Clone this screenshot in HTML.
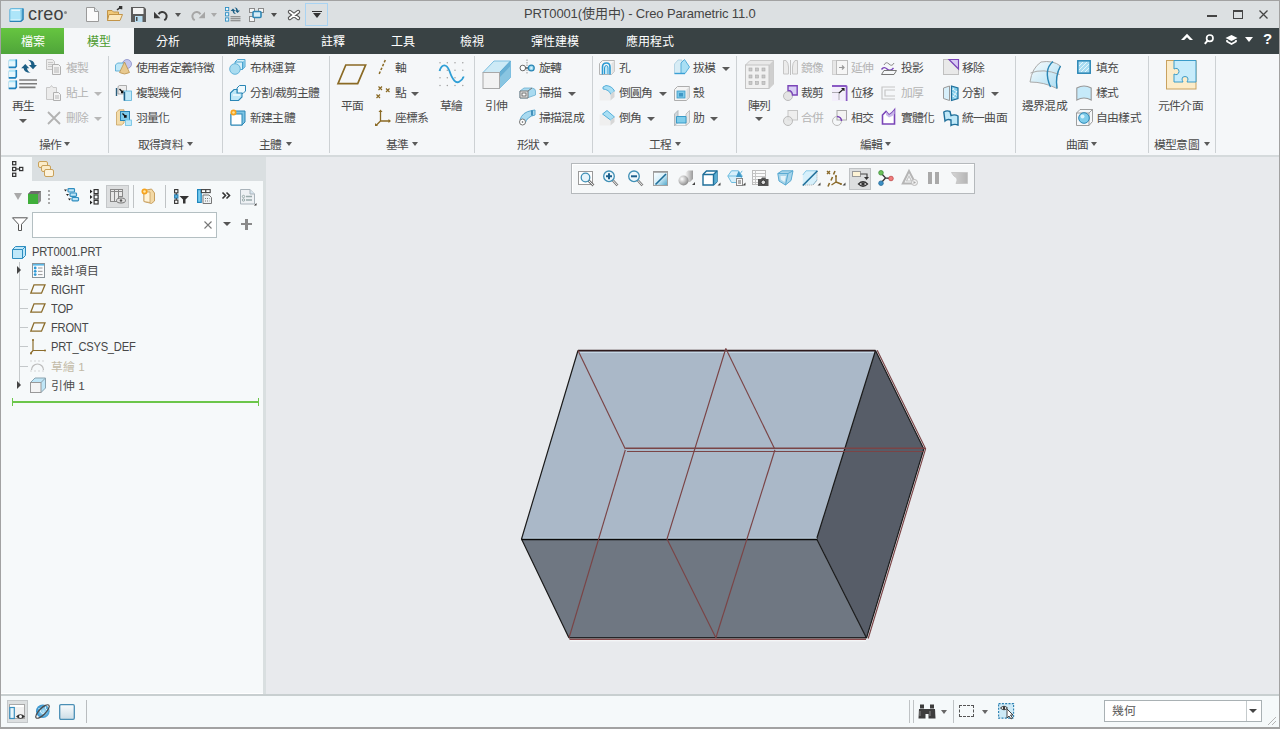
<!DOCTYPE html>
<html lang="zh-TW">
<head>
<meta charset="utf-8">
<style>
*{margin:0;padding:0;box-sizing:border-box}
html,body{width:1280px;height:729px;overflow:hidden;background:#e8eaed;font-family:"Liberation Sans",sans-serif;color:#333}
.a{position:absolute}
svg{position:absolute;overflow:visible}
#border{position:absolute;left:0;top:0;width:1280px;height:729px;border:1px solid #a2a2a2;border-bottom:2px solid #a2a2a2;z-index:50}
#title{left:0;top:0;width:1280px;height:28px;background:#dce0e2}
#tabs{left:0;top:28px;width:1280px;height:26px;background:#394244}
#ribbon{left:0;top:54px;width:1280px;height:101px;background:#f5f7f9}
#rbline{left:0;top:155px;width:1280px;height:2px;background:#d5dadc}
.t{position:absolute;white-space:nowrap;font-size:11.8px;line-height:14px;color:#4a4a4a;letter-spacing:-0.8px}
.tab{position:absolute;top:29px;height:26px;line-height:26px;font-size:12px;color:#fff;text-align:center}
.sep{position:absolute;top:56px;width:1px;height:97px;background:#cdd1d4}
.dis{color:#b4b4b4}
.arr{position:absolute;width:0;height:0;border-left:4px solid transparent;border-right:4px solid transparent;border-top:4px solid #5a5a5a}
#panel{left:0;top:157px;width:263px;height:537px;background:#f6f9fa}
#sash{left:263px;top:181px;width:3px;height:513px;background:#d9dfe0}
#ptabs{left:0;top:157px;width:266px;height:24px;background:#dadfe1}
#gfx{left:266px;top:157px;width:1014px;height:537px;background:#e8eaed}
#status{left:0;top:694px;width:1280px;height:35px;background:#f5f9fa;border-top:2px solid #c8cfd0}
</style>
</head>
<body>
<div id="title" class="a"></div>
<div id="tabs" class="a"></div>
<div id="ribbon" class="a"></div>
<div id="rbline" class="a"></div>
<div id="panel" class="a"></div>
<div id="ptabs" class="a"></div>
<div id="sash" class="a"></div>
<div id="gfx" class="a"></div>
<div id="status" class="a"></div>
<!-- title bar -->
<svg style="left:9px;top:8px" width="15" height="14" viewBox="0 0 15 14">
 <path d="M0.8 2 Q0.8 0.6 2.2 0.6 H14 V11.5 L11.8 13.4 H0.8Z" fill="#ade5f9" stroke="#62b3da" stroke-width="1"/>
 <path d="M11.5 2 L14 0.6 V11.5 L11.8 13.4Z" fill="#7bc3e3"/>
 <path d="M14 0.6 V11.5 L11.8 13.4 H0.8" fill="none" stroke="#2a82b5" stroke-width="1.4"/>
 <path d="M2.5 2.2 H11" stroke="#f2fbfe" stroke-width="1.2"/>
 <path d="M1.5 11.8 H11.5" stroke="#d9f4fc" stroke-width="1"/>
</svg>
<div class="t" style="left:28px;top:4px;font-size:18px;line-height:20px;color:#404040;letter-spacing:0.15px">creo</div>
<div class="a" style="left:63.5px;top:11px;width:3px;height:3px;border-radius:2px;background:#8a8a8a"></div>
<!-- new -->
<svg style="left:86px;top:7px" width="14" height="15" viewBox="0 0 14 15">
 <path d="M0.5 0.5 H8.5 L12.5 4.5 V14.5 H0.5Z" fill="#fbfbfb" stroke="#9a9a9a"/>
 <path d="M8.5 0.5 V4.5 H12.5" fill="#dfe6ea" stroke="#9a9a9a"/>
</svg>
<!-- open -->
<svg style="left:107px;top:6px" width="16" height="16" viewBox="0 0 16 16">
 <path d="M0.5 4.5 H5 L6.5 6 H11.5 V14.5 H0.5Z" fill="#f0c878" stroke="#c29448"/>
 <path d="M2 8.5 H15.5 L13 14.5 H0.5Z" fill="#fbe8bf" stroke="#c29448"/>
 <path d="M10 4 L14 0.8 M12 0.8 H14.5 V3.3" fill="none" stroke="#333" stroke-width="1.6"/>
</svg>
<!-- save -->
<svg style="left:131px;top:7px" width="15" height="15" viewBox="0 0 15 15">
 <path d="M0 0 H13 L15 2 V15 H0Z" fill="#5c5c5c"/>
 <rect x="2" y="1" width="10.5" height="6" fill="#f4f4f4"/>
 <rect x="4" y="9" width="7.5" height="6" fill="#b7dcf0"/>
 <rect x="5" y="10" width="1.5" height="4" fill="#4a4a4a"/>
</svg>
<!-- undo -->
<svg style="left:154px;top:10px" width="14" height="11" viewBox="0 0 14 11">
 <path d="M0 8.2 L0 1.8 L6.4 8.2Z" fill="#3a3a3a"/>
 <path d="M4.6 4.2 A4.3 4.3 0 1 1 10.2 10.2" fill="none" stroke="#3a3a3a" stroke-width="2"/>
</svg>
<div class="arr" style="left:175px;top:13px;border-left-width:3.5px;border-right-width:3.5px;border-top:4px solid #555"></div>
<!-- redo -->
<svg style="left:191px;top:10px" width="14" height="11" viewBox="0 0 14 11">
 <g transform="translate(14,0) scale(-1,1)">
 <path d="M0 8.2 L0 1.8 L6.4 8.2Z" fill="#a6a6a6"/>
 <path d="M4.6 4.2 A4.3 4.3 0 1 1 10.2 10.2" fill="none" stroke="#a6a6a6" stroke-width="2"/>
 </g>
</svg>
<div class="arr" style="left:211px;top:13px;border-left-width:3.5px;border-right-width:3.5px;border-top:4px solid #aaa"></div>
<!-- regenerate -->
<svg style="left:225px;top:7px" width="16" height="15" viewBox="0 0 16 15">
 <g fill="#e9f7fc" stroke="#2f8fc4" stroke-width="0.9"><rect x="0.5" y="0.5" width="3.2" height="3.2"/><rect x="0.5" y="5.7" width="3.2" height="3.2"/><rect x="0.5" y="10.9" width="3.2" height="3.2"/></g>
 <path d="M5.5 9.8 H15.5 M5.5 11.8 H15.5 M5.5 13.8 H15.5" stroke="#7a7a7a" stroke-width="1.1"/>
 <path d="M5.5 4 L8 1.5 L10.5 4 H9.2 Q9.2 6 11 7 Q8 7.2 7.6 4Z" fill="#1b5e85"/>
 <path d="M15 3.5 L12.5 6 L10 3.5 H11.3 Q11.3 1.5 9.5 0.5 Q12.5 0.3 12.9 3.5Z" fill="#1b5e85"/>
</svg>
<!-- windows -->
<svg style="left:249px;top:8px" width="15" height="14" viewBox="0 0 15 14">
 <rect x="0.5" y="0.5" width="5" height="4" fill="#f6f6f6" stroke="#8a8a8a"/>
 <rect x="9.5" y="0.5" width="5" height="4" fill="#f6f6f6" stroke="#8a8a8a"/>
 <rect x="0.5" y="8.5" width="5" height="5" fill="#f6f6f6" stroke="#8a8a8a"/>
 <rect x="4" y="3.5" width="8" height="6" rx="1" fill="#d6ecf7" stroke="#2f86b4" stroke-width="1.6"/>
</svg>
<div class="arr" style="left:271px;top:13px;border-left-width:3.5px;border-right-width:3.5px;border-top:4px solid #4c4c4c"></div>
<!-- close -->
<svg style="left:288px;top:10px" width="12" height="10" viewBox="0 0 12 10">
 <path d="M1.8 1.8 L10.2 8.2 M10.2 1.8 L1.8 8.2" stroke="#555" stroke-width="4" stroke-linecap="round"/>
 <path d="M1.8 1.8 L10.2 8.2 M10.2 1.8 L1.8 8.2" stroke="#fff" stroke-width="1.8" stroke-linecap="round"/>
</svg>
<div class="a" style="left:305px;top:3px;width:23px;height:23px;border:1px solid #a9d3f2"></div>
<div class="a" style="left:312px;top:11px;width:10px;height:1px;background:#333"></div>
<div class="arr" style="left:312.5px;top:13px;border-left-width:4.5px;border-right-width:4.5px;border-top:5px solid #333"></div>
<div class="t" style="left:524px;top:6px;font-size:13px;line-height:16px;color:#444;letter-spacing:-0.14px">PRT0001(使用中) - Creo Parametric 11.0</div>
<!-- window controls -->
<div class="a" style="left:1207px;top:15px;width:10px;height:2px;background:#444"></div>
<div class="a" style="left:1233px;top:10px;width:10px;height:9px;border:1px solid #444;border-top-width:2px"></div>
<svg style="left:1259px;top:10px" width="9" height="9" viewBox="0 0 9 9"><path d="M0.5 0.5 L8.5 8.5 M8.5 0.5 L0.5 8.5" stroke="#444" stroke-width="1.3"/></svg>
<!-- tabs -->
<div class="a" style="left:1px;top:28px;width:63px;height:26px;background:linear-gradient(#66c540,#4fa53a)"></div>
<div class="tab" style="left:1px;width:63px">檔案</div>
<div class="a" style="left:64px;top:28px;width:70px;height:26px;background:#f5f7f9"></div>
<div class="tab" style="left:64px;width:70px;color:#4a9a2c">模型</div>
<div class="tab" style="left:134px;width:68px">分析</div>
<div class="tab" style="left:202px;width:98px">即時模擬</div>
<div class="tab" style="left:300px;width:66px">註釋</div>
<div class="tab" style="left:370px;width:66px">工具</div>
<div class="tab" style="left:439px;width:66px">檢視</div>
<div class="tab" style="left:505px;width:100px">彈性建模</div>
<div class="tab" style="left:600px;width:100px">應用程式</div>
<svg style="left:1181px;top:33px" width="12" height="8" viewBox="0 0 12 8"><path d="M0 7 L6 0.8 L12 7 H8.8 L6 4.2 L3.2 7Z" fill="#fff"/></svg>
<svg style="left:1204px;top:34px" width="10" height="11" viewBox="0 0 10 11"><circle cx="5.8" cy="4.2" r="3.2" fill="none" stroke="#fff" stroke-width="1.7"/><path d="M3.8 6.3 L0.8 9.8" stroke="#fff" stroke-width="2"/></svg>
<svg style="left:1225px;top:34px" width="13" height="11" viewBox="0 0 13 11"><path d="M0.5 4 L6.5 1 L12.5 4 L6.5 7Z" fill="#fff"/><path d="M2 6 V7.5 L6.5 10 L11 7.5 V6" fill="none" stroke="#fff" stroke-width="1.6"/></svg>
<div class="arr" style="left:1245px;top:37px;border-left-width:4px;border-right-width:4px;border-top:5px solid #fff"></div>
<div class="t" style="left:1263px;top:31px;font-size:15px;line-height:16px;font-weight:bold;color:#fff;letter-spacing:0">?</div>
<!-- ribbon separators -->
<div class="sep" style="left:108px"></div>
<div class="sep" style="left:222px"></div>
<div class="sep" style="left:329px"></div>
<div class="sep" style="left:474px"></div>
<div class="sep" style="left:592px"></div>
<div class="sep" style="left:736px"></div>
<div class="sep" style="left:1015px"></div>
<div class="sep" style="left:1148px"></div>
<div class="sep" style="left:1215px"></div>
<!-- group labels -->
<div class="t" style="left:39px;top:138px">操作</div><div class="arr" style="left:64px;top:142px;border-left-width:3.5px;border-right-width:3.5px"></div>
<div class="t" style="left:138px;top:138px">取得資料</div><div class="arr" style="left:187px;top:142px;border-left-width:3.5px;border-right-width:3.5px"></div>
<div class="t" style="left:259px;top:138px">主體</div><div class="arr" style="left:286px;top:142px;border-left-width:3.5px;border-right-width:3.5px"></div>
<div class="t" style="left:386px;top:138px">基準</div><div class="arr" style="left:412px;top:142px;border-left-width:3.5px;border-right-width:3.5px"></div>
<div class="t" style="left:517px;top:138px">形狀</div><div class="arr" style="left:543px;top:142px;border-left-width:3.5px;border-right-width:3.5px"></div>
<div class="t" style="left:649px;top:138px">工程</div><div class="arr" style="left:675px;top:142px;border-left-width:3.5px;border-right-width:3.5px"></div>
<div class="t" style="left:860px;top:138px">編輯</div><div class="arr" style="left:885px;top:142px;border-left-width:3.5px;border-right-width:3.5px"></div>
<div class="t" style="left:1066px;top:138px">曲面</div><div class="arr" style="left:1091px;top:142px;border-left-width:3.5px;border-right-width:3.5px"></div>
<div class="t" style="left:1154px;top:138px">模型意圖</div><div class="arr" style="left:1204px;top:142px;border-left-width:3.5px;border-right-width:3.5px"></div>
<!-- 操作 -->
<div class="t" style="left:12px;top:99px">再生</div><div class="arr" style="left:19px;top:119px"></div>
<div class="t dis" style="left:66px;top:61px">複製</div>
<div class="t dis" style="left:66px;top:86px">貼上</div><div class="arr" style="left:94px;top:92px;border-top-color:#b8b8b8"></div>
<div class="t dis" style="left:66px;top:111px">刪除</div><div class="arr" style="left:94px;top:117px;border-top-color:#b8b8b8"></div>
<!-- 取得資料 -->
<div class="t" style="left:136px;top:61px">使用者定義特徵</div>
<div class="t" style="left:136px;top:86px">複製幾何</div>
<div class="t" style="left:136px;top:111px">羽量化</div>
<!-- 主體 -->
<div class="t" style="left:250px;top:61px">布林運算</div>
<div class="t" style="left:250px;top:86px">分割/裁剪主體</div>
<div class="t" style="left:250px;top:111px">新建主體</div>
<!-- 基準 -->
<div class="t" style="left:341px;top:99px">平面</div>
<div class="t" style="left:395px;top:61px">軸</div>
<div class="t" style="left:395px;top:86px">點</div><div class="arr" style="left:411px;top:92px"></div>
<div class="t" style="left:395px;top:111px">座標系</div>
<div class="t" style="left:440px;top:99px">草繪</div>
<!-- 形狀 -->
<div class="t" style="left:485px;top:99px">引伸</div>
<div class="t" style="left:539px;top:61px">旋轉</div>
<div class="t" style="left:539px;top:86px">掃描</div><div class="arr" style="left:568px;top:92px"></div>
<div class="t" style="left:539px;top:111px">掃描混成</div>
<!-- 工程 -->
<div class="t" style="left:619px;top:61px">孔</div>
<div class="t" style="left:619px;top:86px">倒圓角</div><div class="arr" style="left:659px;top:92px"></div>
<div class="t" style="left:619px;top:111px">倒角</div><div class="arr" style="left:647px;top:117px"></div>
<div class="t" style="left:693px;top:61px">拔模</div><div class="arr" style="left:722px;top:67px"></div>
<div class="t" style="left:693px;top:86px">殼</div>
<div class="t" style="left:693px;top:111px">肋</div><div class="arr" style="left:710px;top:117px"></div>
<!-- 陣列 -->
<div class="t" style="left:748px;top:99px">陣列</div><div class="arr" style="left:755px;top:117px"></div>
<!-- 編輯 -->
<div class="t dis" style="left:801px;top:61px">鏡像</div>
<div class="t" style="left:801px;top:86px">裁剪</div>
<div class="t dis" style="left:801px;top:111px">合併</div>
<div class="t dis" style="left:851px;top:61px">延伸</div>
<div class="t" style="left:851px;top:86px">位移</div>
<div class="t" style="left:851px;top:111px">相交</div>
<div class="t" style="left:901px;top:61px">投影</div>
<div class="t dis" style="left:901px;top:86px">加厚</div>
<div class="t" style="left:901px;top:111px">實體化</div>
<div class="t" style="left:962px;top:61px">移除</div>
<div class="t" style="left:962px;top:86px">分割</div><div class="arr" style="left:991px;top:92px"></div>
<div class="t" style="left:962px;top:111px">統一曲面</div>
<!-- 曲面 -->
<div class="t" style="left:1022px;top:99px">邊界混成</div>
<div class="t" style="left:1096px;top:61px">填充</div>
<div class="t" style="left:1096px;top:86px">樣式</div>
<div class="t" style="left:1096px;top:111px">自由樣式</div>
<!-- 模型意圖 -->
<div class="t" style="left:1158px;top:99px">元件介面</div>
<!-- 操作 icons -->
<svg style="left:8px;top:59px" width="30" height="31" viewBox="0 0 30 31">
 <g>
  <path d="M0.5 1.8 L1.8 0.5 H8.5 V7.3 L7.3 8.6 H0.5Z" fill="#e6f7fd" stroke="#b9d9e8" stroke-width="0.8"/>
  <path d="M0.5 12.3 L1.8 11 H8.5 V17.8 L7.3 19.1 H0.5Z" fill="#e6f7fd" stroke="#b9d9e8" stroke-width="0.8"/>
  <path d="M0.5 22.8 L1.8 21.5 H8.5 V28.3 L7.3 29.6 H0.5Z" fill="#e6f7fd" stroke="#b9d9e8" stroke-width="0.8"/>
  <path d="M1 1.5 H8 M1 12 H8 M1 22.5 H8" stroke="#a6e3f8" stroke-width="1.6"/>
 </g>
 <g stroke="#1f82bd" stroke-width="1.6" fill="none"><path d="M8.3 0.5 V7.3 L7.3 8.4 H0.8"/><path d="M8.3 11 V17.8 L7.3 18.9 H0.8"/><path d="M8.3 21.5 V28.3 L7.3 29.4 H0.8"/></g>
 <path d="M11.2 21 H29 M11.2 24.7 H29 M11.2 28.4 H27.5" stroke="#7d7d7d" stroke-width="1.6"/>
 <path d="M17.3 5 L13.2 9.3 H21.2Z" fill="#1b5e85"/>
 <path d="M15.6 9 Q15.8 13.8 22.6 13.8 Q19.2 12.2 19 9Z" fill="#1b5e85"/>
 <path d="M25 10.2 L20.9 5.9 H28.9Z" fill="#1b5e85"/>
 <path d="M26.7 6.2 Q26.5 1.2 20 0.8 Q23.3 2.8 23.3 6.2Z" fill="#1b5e85"/>
</svg>
<svg style="left:46px;top:59px" width="16" height="16" viewBox="0 0 16 16">
 <path d="M0.5 0.5 H6.5 L8.5 2.5 V10.5 H0.5Z" fill="#ececec" stroke="#c4c4c4"/>
 <path d="M2 3.5 H7 M2 5.5 H7 M2 7.5 H7" stroke="#c8c8c8"/>
 <path d="M6.5 5.5 H12.5 L14.5 7.5 V15.5 H6.5Z" fill="#f2f2f2" stroke="#b0b0b0"/>
 <path d="M8 9 H13 M8 11 H13 M8 13 H13" stroke="#b5b5b5"/>
</svg>
<svg style="left:46px;top:85px" width="16" height="16" viewBox="0 0 16 16">
 <path d="M0.5 2.5 H4 L5.5 0.5 L7 2.5 H10.5 V14.5 H0.5Z" fill="#ececec" stroke="#c8c8c8"/>
 <path d="M7.5 7.5 H12.5 L14.5 9.5 V15.5 H7.5Z" fill="#f4f4f4" stroke="#b0b0b0"/>
 <path d="M9 11 H13 M9 13 H13" stroke="#b5b5b5"/>
</svg>
<svg style="left:47px;top:111px" width="14" height="14" viewBox="0 0 14 14">
 <path d="M1 1 L13 13 M13 1 L1 13" stroke="#b2b2b2" stroke-width="1.8"/>
</svg>
<!-- 取得資料 icons -->
<svg style="left:115px;top:59px" width="17" height="16" viewBox="0 0 17 16">
 <circle cx="12" cy="5" r="4.5" fill="#c4c6ec" stroke="#8a8fc8" stroke-width="0.8"/>
 <path d="M0.5 6 L2.5 4 H10 V10 L8 12 H0.5Z" fill="#bfe8f8" stroke="#4aa3cf" stroke-width="0.8"/>
 <path d="M9.5 3 L14.5 13.5 Q9.5 16.5 4.5 13.5Z" fill="#e8c98f" stroke="#b99250" stroke-width="0.8"/>
</svg>
<svg style="left:116px;top:85px" width="16" height="16" viewBox="0 0 16 16">
 <path d="M2 1.5 L3.5 0.5 H10.5 V9 H2Z" fill="#ededed" stroke="#9a9a9a" stroke-width="0.8"/>
 <path d="M0.5 3 V11" stroke="#2a5d7c" stroke-width="1.4"/>
 <path d="M3.5 4 L7 7.5 M5 7.5 H7 V5.5" stroke="#111" stroke-width="1.3" fill="none"/>
 <rect x="8" y="6" width="7.5" height="9.5" fill="#bfe8f8" stroke="#5ab1d8" stroke-width="0.8"/>
 <path d="M8.5 7 V15.5" stroke="#1f5f86" stroke-width="1.4"/>
</svg>
<svg style="left:116px;top:109px" width="16" height="17" viewBox="0 0 16 17">
 <path d="M0.5 3 L3 0.8 H8 V14 L5.5 16 H0.5Z" fill="#f3dcaa" stroke="#c9a260" stroke-width="0.8"/>
 <rect x="4.5" y="2.5" width="9" height="9" fill="#7fcdeb" stroke="#2a86b5" stroke-width="1"/>
 <path d="M6.5 4.5 L10 8 M8 8 H10 V6" stroke="#111" stroke-width="1.3" fill="none"/>
 <rect x="9.5" y="11" width="6" height="5.5" fill="#bfe8f8" stroke="#6cc0e3" stroke-width="0.8"/>
</svg>
<!-- 主體 icons -->
<svg style="left:229px;top:59px" width="17" height="16" viewBox="0 0 17 16">
 <path d="M6 3 L8.5 0.5 H16 V8 L13.5 10.5 H6Z" fill="#d5f0fa" stroke="#3d9ccc" stroke-width="0.9"/>
 <path d="M13.5 3 L16 0.5 V8 L13.5 10.5Z" fill="#7ec4e4"/>
 <path d="M6 3 H13.5 V10.5" fill="none" stroke="#3d9ccc" stroke-width="0.9"/>
 <circle cx="6" cy="10" r="5.3" fill="#a9dcf0" stroke="#5aaed6" stroke-width="0.9"/>
</svg>
<svg style="left:230px;top:85px" width="16" height="16" viewBox="0 0 16 16">
 <path d="M7 3 L9.5 0.5 H15.5 V6 L13 8.5 H7Z" fill="#eef9fd" stroke="#2a86b5" stroke-width="1"/>
 <path d="M0.5 8 L4 4.5 H7 V8 H12 V12 L8.5 15.5 H0.5Z" fill="#bfe8f8" stroke="#2a86b5" stroke-width="1.1"/>
 <path d="M3 10 H10" stroke="#fff" stroke-width="1.2"/>
</svg>
<svg style="left:230px;top:109px" width="16" height="17" viewBox="0 0 16 17">
 <path d="M1 5 L4 2 H15 V13 L12 16 H1Z" fill="#7ec4e4" stroke="#2a86b5" stroke-width="1"/>
 <rect x="1" y="5" width="11" height="11" fill="#fff" stroke="#2a86b5" stroke-width="1"/>
 <circle cx="3.5" cy="3.5" r="3" fill="#f6a21d"/><circle cx="3.5" cy="3.5" r="1.3" fill="#ffe49a"/>
</svg>
<!-- 基準 icons -->
<svg style="left:336px;top:63px" width="32" height="23" viewBox="0 0 32 23">
 <path d="M9.8 2 H29.6 L21.7 20.6 H2Z" fill="none" stroke="#8a6a25" stroke-width="1.7"/>
</svg>
<svg style="left:377px;top:59px" width="10" height="17" viewBox="0 0 10 17">
 <path d="M8.3 1 L1.7 16" stroke="#8a6a25" stroke-width="1.5" stroke-dasharray="2.6 1.6"/>
</svg>
<svg style="left:376px;top:86px" width="15" height="14" viewBox="0 0 15 14">
 <g stroke="#8a6a25" stroke-width="1.2"><path d="M2.5 0.5 L6 4 M6 0.5 L2.5 4"/><path d="M10 2.5 L13.5 6 M13.5 2.5 L10 6"/><path d="M0.5 8.5 L4 12 M4 8.5 L0.5 12"/></g>
</svg>
<svg style="left:374px;top:109px" width="18" height="18" viewBox="0 0 18 18">
 <g stroke="#8a6a25" stroke-width="1.3" fill="none"><path d="M6.5 2 V12 H15.5 M6.5 12 L2 16.5"/></g>
 <g fill="#8a6a25"><path d="M4.5 3 L6.5 0.5 L8.5 3Z"/><path d="M14.5 10 L17 12 L14.5 14Z"/><path d="M1 14 L1 17 L4 17Z"/></g>
</svg>
<svg style="left:438px;top:61px" width="27" height="26" viewBox="0 0 27 26">
 <g fill="#9a9a9a"><circle cx="2" cy="1.7" r="0.7"/><circle cx="9.3" cy="1.7" r="0.7"/><circle cx="17" cy="1.7" r="0.7"/><circle cx="24.8" cy="1.7" r="0.7"/>
 <circle cx="2" cy="9.3" r="0.7"/><circle cx="9.3" cy="9.3" r="0.7"/><circle cx="17" cy="9.3" r="0.7"/><circle cx="24.8" cy="9.3" r="0.7"/>
 <circle cx="2" cy="16.8" r="0.7"/><circle cx="9.3" cy="16.8" r="0.7"/><circle cx="17" cy="16.8" r="0.7"/><circle cx="24.8" cy="16.8" r="0.7"/>
 <circle cx="2" cy="24.5" r="0.7"/><circle cx="9.3" cy="24.5" r="0.7"/><circle cx="17" cy="24.5" r="0.7"/><circle cx="24.8" cy="24.5" r="0.7"/></g>
 <path d="M1.5 10 C4 2.5 8.5 2.5 11.5 10 C14.5 19 18 23 21.5 20.5 C23.5 19.5 25 17.5 25.8 15.5" fill="none" stroke="#2f9fd6" stroke-width="1.8"/>
</svg>
<!-- 形狀 icons -->
<svg style="left:482px;top:60px" width="30" height="30" viewBox="0 0 30 30">
 <path d="M1 12.5 L12 1 H28.5 V17.5 L17.5 28.5 H1Z" fill="#cdeaf6"/>
 <path d="M17.5 12.5 L28.5 1 V17.5 L17.5 28.5Z" fill="#68b0d4"/>
 <path d="M17.5 17.5 L28.5 6 V17.5 L17.5 28.5Z" fill="#a9d9ee" opacity="0.5"/>
 <path d="M1 12.5 L12 1 H28.5 V17.5 L17.5 28.5" fill="none" stroke="#7ebfe0" stroke-width="1"/>
 <path d="M17.5 12.5 L28.5 1" stroke="#5aa8d0" stroke-width="1"/>
 <rect x="1" y="12.5" width="16.5" height="16" fill="#f2f2f2" stroke="#a8a8a8" stroke-width="1"/>
</svg>
<svg style="left:519px;top:59px" width="17" height="16" viewBox="0 0 17 16">
 <path d="M8 0.5 V15.5" stroke="#999" stroke-width="1" stroke-dasharray="1.5 1"/>
 <path d="M4 9 H12" stroke="#555" stroke-width="1.4"/>
 <circle cx="3.8" cy="9" r="2.8" fill="#fff" stroke="#666" stroke-width="1"/>
 <circle cx="12.3" cy="9" r="2.9" fill="#9bd8f0" stroke="#2a86b5" stroke-width="1.3"/>
 <circle cx="12.3" cy="9" r="1.1" fill="#e0f4fb"/>
</svg>
<svg style="left:519px;top:87px" width="17" height="12" viewBox="0 0 17 12">
 <path d="M1 4 L5 1 H13 Q16.5 1.5 16.5 4 V8 L8 11 H1Z" fill="#a9daf0" stroke="#6aaed0" stroke-width="0.8"/>
 <path d="M1 4 H9 V11 H1Z" fill="#e8e8e8" stroke="#777" stroke-width="1"/>
 <rect x="3" y="6" width="4" height="3" fill="#fff" stroke="#555" stroke-width="0.8"/>
 <path d="M9 4 L13 1" stroke="#777"/>
</svg>
<svg style="left:519px;top:109px" width="17" height="17" viewBox="0 0 17 17">
 <path d="M1 11 Q3 3 13 1.5 L16 1 V6 Q8 7.5 6 14.5Z" fill="#a9daf0" stroke="#5aa8d0" stroke-width="1"/>
 <path d="M13 1.5 V6.5" stroke="#2a7fb0" stroke-width="1.6"/>
 <circle cx="3.5" cy="13" r="3" fill="#fff" stroke="#777" stroke-width="1"/>
 <circle cx="3.5" cy="13" r="0.8" fill="#555"/>
</svg>
<!-- 工程 icons -->
<svg style="left:599px;top:60px" width="16" height="15" viewBox="0 0 16 15">
 <path d="M0.5 3.5 L3.5 0.5 H15.5 V11.5 L12.5 14.5 H0.5Z" fill="#f6f6f6" stroke="#b4b4b4"/>
 <path d="M12.5 3.5 L15.5 0.5 V11.5 L12.5 14.5Z" fill="#e2e2e2"/>
 <path d="M3.5 14.5 V7 Q3.5 3 7.5 3 Q11 3 11 7 V14.5" fill="none" stroke="#2a9ad3" stroke-width="1.6"/>
 <path d="M5.5 14 V8 Q5.5 5.5 7.5 5.5 Q9 5.5 9 8 V14" fill="#bfe8f8" stroke="#2a9ad3" stroke-width="1"/>
</svg>
<svg style="left:599px;top:85px" width="16" height="16" viewBox="0 0 16 16">
 <path d="M0.5 4.5 H6 Q10 4.5 11.5 8.5 V15.5 H0.5Z" fill="#efefef"/>
 <path d="M4 2 L7 0.5 Q13 1 15.5 6 L12 9.5 Q10 4.5 4 4Z" fill="#a9dff4" stroke="#4aa8d6" stroke-width="0.9"/>
 <path d="M11.5 9 L15.5 6 V12 L11.5 15.5Z" fill="#d7d7d7"/>
</svg>
<svg style="left:599px;top:110px" width="16" height="16" viewBox="0 0 16 16">
 <path d="M0.5 4.5 H7 L11.5 9 V15.5 H0.5Z" fill="#efefef"/>
 <path d="M3.5 4 L8 0.5 L15.5 7 L11.5 10Z" fill="#a9dff4" stroke="#4aa8d6" stroke-width="0.9"/>
 <path d="M11.5 10 L15.5 7 V12 L11.5 15.5Z" fill="#d7d7d7"/>
</svg>
<svg style="left:674px;top:59px" width="16" height="15" viewBox="0 0 16 15">
 <path d="M0.5 5 L4 1 H8 V14.5 H0.5Z" fill="#d7ecf5" stroke="#a8cde0" stroke-width="0.8"/>
 <path d="M7 4 L10.5 0.5 L15.5 8 L11 14.5 H7Z" fill="#a9dff4" stroke="#4aa8d6" stroke-width="0.9"/>
 <path d="M0.5 14.5 H11" stroke="#3aa0d5" stroke-width="1.4"/>
</svg>
<svg style="left:674px;top:86px" width="16" height="15" viewBox="0 0 16 15">
 <path d="M0.5 3.5 L3.5 0.5 H15.5 V11.5 L12.5 14.5 H0.5Z" fill="#f4f4f4" stroke="#adadad"/>
 <path d="M12.5 3.5 L15.5 0.5 V11.5 L12.5 14.5Z" fill="#dedede"/>
 <rect x="3" y="5" width="8" height="7" fill="#7ec8e8" stroke="#3a9bc8" stroke-width="0.8"/>
 <rect x="5" y="7" width="4" height="3.5" fill="#3f98c6"/>
</svg>
<svg style="left:674px;top:110px" width="16" height="16" viewBox="0 0 16 16">
 <path d="M0.5 4 L4 0.5 V12.5 L0.5 15.5Z" fill="#d0d6da" stroke="#a7b0b5" stroke-width="0.8"/>
 <path d="M12 4 L15.5 0.5 V12.5 L12 15.5Z" fill="#e6e6e6" stroke="#b5b5b5" stroke-width="0.8"/>
 <path d="M2.5 6.5 H12 V13 H2.5Z" fill="#7fcdeb" stroke="#3a9bc8" stroke-width="1"/>
 <path d="M0.5 15.5 H12" stroke="#aaa" stroke-dasharray="1 1"/>
</svg>
<!-- 陣列 -->
<svg style="left:745px;top:60px" width="30" height="30" viewBox="0 0 30 30">
 <path d="M0.5 5 L5 0.5 H28.5 V24 L24 28.5 H0.5Z" fill="#e9e9e9" stroke="#c9c9c9"/>
 <path d="M24 5 L28.5 0.5 V24 L24 28.5Z" fill="#cfcfcf"/>
 <rect x="0.5" y="5" width="23.5" height="23.5" fill="#f0f0f0" stroke="#c4c4c4"/>
 <g fill="#c9c9c9" stroke="#aaa" stroke-width="0.6">
  <rect x="4" y="8" width="3" height="3"/><rect x="10.5" y="8" width="3" height="3"/><rect x="17" y="8" width="3" height="3"/>
  <rect x="4" y="15" width="3" height="3"/><rect x="10.5" y="15" width="3" height="3"/><rect x="17" y="15" width="3" height="3"/>
  <rect x="4" y="21.5" width="3" height="3"/><rect x="10.5" y="21.5" width="3" height="3"/><rect x="17" y="21.5" width="3" height="3"/>
 </g>
</svg>
<!-- 編輯 icons -->
<svg style="left:783px;top:60px" width="15" height="15" viewBox="0 0 15 15">
 <path d="M0.5 14 V0.5 H3 Q5.5 3 5.5 7 V14Z" fill="#ececec" stroke="#c6c6c6"/>
 <path d="M14.5 14 V0.5 H12 Q9.5 3 9.5 7 V14Z" fill="#ececec" stroke="#c6c6c6"/>
 <path d="M7.5 0 V15" stroke="#c0c0c0"/>
</svg>
<svg style="left:783px;top:85px" width="15" height="16" viewBox="0 0 15 16">
 <circle cx="5" cy="11" r="4.5" fill="#e4e4e4" stroke="#bbb"/>
 <path d="M5 0.8 H14.2 V10 H9.5 Q9.5 5.5 5 5.5Z" fill="#d8cff5" stroke="#7a45b8" stroke-width="1.4"/>
</svg>
<svg style="left:783px;top:110px" width="15" height="16" viewBox="0 0 15 16">
 <rect x="5" y="0.5" width="9.5" height="9.5" fill="#eee" stroke="#c5c5c5"/>
 <circle cx="5" cy="11" r="4.5" fill="#e4e4e4" fill-opacity="0.8" stroke="#bbb"/>
</svg>
<svg style="left:832px;top:60px" width="16" height="15" viewBox="0 0 16 15">
 <rect x="0.5" y="0.5" width="4" height="14" fill="#e7e7e7" stroke="#d0d0d0"/>
 <rect x="4.5" y="0.5" width="11" height="14" fill="#f6f6f6" stroke="#bdbdbd"/>
 <path d="M7 7.5 H12 M10 5.5 L12 7.5 L10 9.5" fill="none" stroke="#999" stroke-width="1.2"/>
</svg>
<svg style="left:832px;top:85px" width="16" height="16" viewBox="0 0 16 16">
 <path d="M0 0 H14 Q15.5 0 15.5 1.5 V16 H13.5 V2 H0Z" fill="#8a5ac4"/>
 <path d="M0 2 H13.5 V16 H0Z" fill="#f3eefb"/>
 <path d="M0.5 7.5 H7 M7 7.5 V15.5" stroke="#666" stroke-dasharray="1 1"/>
 <path d="M7 8 L12 3.5 M9.5 3.5 H12 V6" fill="none" stroke="#222" stroke-width="1.1"/>
</svg>
<svg style="left:832px;top:110px" width="15" height="16" viewBox="0 0 15 16">
 <rect x="5" y="0.5" width="9.5" height="9.5" fill="#f3f3f3" stroke="#aaa"/>
 <circle cx="5" cy="11" r="4.5" fill="none" stroke="#bbb"/>
 <path d="M5 6.5 A4.5 4.5 0 0 1 9.5 11" fill="none" stroke="#7a45b8" stroke-width="1.6"/>
</svg>
<svg style="left:881px;top:61px" width="16" height="14" viewBox="0 0 16 14">
 <path d="M3 4 Q5 0 8 3 Q11 6 13 2" fill="none" stroke="#888" stroke-width="1"/>
 <path d="M0.5 8.5 Q3 5 6 8 Q9 11 12.5 7" fill="none" stroke="#7a45b8" stroke-width="1.4"/>
 <path d="M3 9.5 H15.5 L13 13.5 H0.5Z" fill="none" stroke="#777" stroke-width="1"/>
</svg>
<svg style="left:881px;top:86px" width="15" height="14" viewBox="0 0 15 14">
 <path d="M14 1 H1 V13 H14 M14 4 H4 V10 H14" fill="none" stroke="#c6c6c6" stroke-width="1.2"/>
</svg>
<svg style="left:881px;top:109px" width="16" height="16" viewBox="0 0 16 16">
 <path d="M1.5 15 V6 L5 2.5 L8 6 Q11 4.5 13.5 1 V15Z" fill="#fff" stroke="#7a45b8" stroke-width="1.6"/>
 <path d="M5 2.5 L8 6 Q11 4.5 13.5 1 V5 Q11 8 8 8.5 L5 6Z" fill="#c9b8ea"/>
</svg>
<svg style="left:943px;top:59px" width="16" height="16" viewBox="0 0 16 16">
 <rect x="0.5" y="0.5" width="15" height="15" fill="#e9e9e9" stroke="#c0c0c0"/>
 <path d="M6 0.5 H15.5 V10Z" fill="#d7c9f3" stroke="#7a45b8" stroke-width="1.2"/>
</svg>
<svg style="left:943px;top:85px" width="16" height="16" viewBox="0 0 16 16">
 <path d="M0.5 3 L6.5 1 V15.5 L0.5 13.5Z" fill="#d7effa" stroke="#999"/>
 <path d="M8.5 1 L15 3 V13.5 L8.5 15.5Z" fill="#7fcdeb" stroke="#1f6f9a" stroke-width="1.2"/>
 <path d="M9.5 4 L14 7 M9.5 7.5 L14 10.5 M9.5 11 L13 13 M11 3 L9.5 5 M14 6 L10 12" stroke="#fff" stroke-width="0.7"/>
</svg>
<svg style="left:943px;top:110px" width="16" height="16" viewBox="0 0 16 16">
 <path d="M0.8 2 Q4 0 7 1.5 L8 5.5 Q12 4 15 6 V15 Q11.5 13.5 8 15.5 V10 Q4.5 8.5 2 11Z" fill="#bfe8f8" stroke="#1f6f9a" stroke-width="1.4"/>
</svg>
<!-- 曲面 icons -->
<svg style="left:1029px;top:60px" width="33" height="30" viewBox="0 0 33 30">
 <defs><linearGradient id="bb" x1="0" y1="0" x2="1" y2="1"><stop offset="0" stop-color="#fbfdfe"/><stop offset="1" stop-color="#a9dcf2"/></linearGradient></defs>
 <path d="M1 22 Q3 8 12 2 Q24 0 31.5 6 Q26 16 28 28.5 Q15 22 1 22Z" fill="url(#bb)" stroke="#aaa" stroke-width="1"/>
 <path d="M1.5 13 Q14 8 30.5 14.5" fill="none" stroke="#aaa" stroke-width="1"/>
 <path d="M24 1.5 Q14 10 21.5 27" fill="none" stroke="#2a86b5" stroke-width="1.4"/>
 <path d="M31.5 6 Q26 16 28 28.5" fill="none" stroke="#2a86b5" stroke-width="1.4"/>
</svg>
<svg style="left:1077px;top:60px" width="14" height="14" viewBox="0 0 14 14">
 <rect x="0.8" y="0.8" width="12.4" height="12.4" fill="#a9dcf2" stroke="#2a86b5" stroke-width="1.5"/>
 <path d="M2 10 L10 2 M4 12 L12 4 M2 6 L6 2 M8 12 L12 8" stroke="#e6f6fc" stroke-width="1"/>
</svg>
<svg style="left:1076px;top:85px" width="16" height="16" viewBox="0 0 16 16">
 <path d="M0.8 3 Q8 -1 15.2 3 V15 Q8 11 0.8 15Z" fill="#c6eafa" stroke="#999" stroke-width="1.1"/>
</svg>
<svg style="left:1076px;top:109px" width="17" height="17" viewBox="0 0 17 17">
 <path d="M0.5 4 L4 0.5 H16.5 V12.5 L13 16.5 H0.5Z M0.5 4 H13 V16.5 M13 4 L16.5 0.5" fill="none" stroke="#888" stroke-width="0.8"/>
 <circle cx="8" cy="9" r="5.3" fill="#7fcdeb" stroke="#2a86b5" stroke-width="1"/>
 <circle cx="6.5" cy="7.5" r="2" fill="#d9f3fb"/>
</svg>
<!-- 模型意圖 -->
<svg style="left:1166px;top:60px" width="31" height="30" viewBox="0 0 31 30">
 <rect x="0.5" y="0.5" width="29.5" height="28.5" fill="#fcecc9" stroke="#c9a260"/>
 <path d="M8 0.5 H30 V22 H21 Q22 20 22 19 Q22 16.5 19 16.5 Q16 16.5 16 19 Q16 20 17 22 H8 V14 Q10 15 11 14.5 Q13 13.5 13 11.5 Q13 9 11 8.5 Q10 8 8 9Z" fill="#c7ecfb" stroke="#3a9bc8" stroke-width="1"/>
</svg>
<!-- panel tabs -->
<div class="a" style="left:1px;top:157px;width:31px;height:24px;background:#f6f9fa"></div>
<svg style="left:12px;top:161px" width="12" height="16" viewBox="0 0 12 16">
 <g fill="none" stroke="#333" stroke-width="1.2">
 <rect x="0.6" y="0.6" width="3.2" height="3.2"/><rect x="0.6" y="6.4" width="3.2" height="3.2"/><rect x="0.6" y="12.2" width="3.2" height="3.2"/>
 <rect x="7.6" y="6.4" width="3.2" height="3.2"/><path d="M3.8 8 H7.6"/>
 </g>
</svg>
<svg style="left:38px;top:161px" width="16" height="16" viewBox="0 0 16 16">
 <g stroke="#c9a15a" stroke-width="1">
 <rect x="0.5" y="0.5" width="9" height="6" rx="1.5" fill="#fbecc8"/>
 <rect x="3.5" y="4.5" width="9" height="6" rx="1.5" fill="#fbecc8"/>
 <rect x="6.5" y="8.5" width="9" height="7" rx="1.5" fill="#fdf3dc"/>
 </g>
</svg>
<!-- toolbar row -->
<div class="arr" style="left:14px;top:193px;border-left-width:4.5px;border-right-width:4.5px;border-top:7px solid #a9a9a9"></div>
<svg style="left:28px;top:191px" width="14" height="13" viewBox="0 0 14 13">
 <path d="M0 3 L3 0 H13 V10 L10 13 H0Z" fill="#8c8c8c"/>
 <path d="M3 0 H13 L10 3 H0Z" fill="#6d6d6d"/>
 <rect x="0" y="3" width="10" height="10" fill="#3fae3a"/>
</svg>
<div class="a" style="left:48px;top:190px;width:2px;height:14px;background:repeating-linear-gradient(#aaa 0 2px,transparent 2px 4px)"></div>
<svg style="left:64px;top:188px" width="16" height="16" viewBox="0 0 16 16">
 <g fill="#222"><path d="M0 1.5 H3 L1.5 3.5Z"/><path d="M2 6 H5 L3.5 8Z"/><path d="M4 10.5 H7 L5.5 12.5Z"/></g>
 <g fill="#bfe5f7" stroke="#2f8ec0" stroke-width="1.2"><rect x="4" y="0.6" width="6.5" height="3.4" rx="0.8"/><rect x="6" y="5" width="6.5" height="3.4" rx="0.8"/><rect x="8" y="9.5" width="6.5" height="3.4" rx="0.8"/></g>
</svg>
<svg style="left:90px;top:189px" width="9" height="15" viewBox="0 0 9 15">
 <g fill="#222"><path d="M0 0.5 L2.5 2.5 L0 4.5Z"/><path d="M0 6 L2.5 8 L0 10Z"/><path d="M0 11.5 L2.5 13.5 L0 15.5Z"/></g>
 <g fill="none" stroke="#333" stroke-width="1.2"><rect x="4.1" y="0.6" width="4" height="4"/><rect x="4.1" y="6" width="4" height="4"/><rect x="4.1" y="11.4" width="4" height="3.6"/></g>
</svg>
<div class="a" style="left:106px;top:185px;width:23px;height:23px;background:#dcdedf;border:1px solid #c4c7c9"></div>
<svg style="left:110px;top:189px" width="16" height="15" viewBox="0 0 16 15">
 <g fill="#e8e8e8" stroke="#888" stroke-width="1"><rect x="0.5" y="0.5" width="4" height="12"/><rect x="4.5" y="0.5" width="4" height="12"/><rect x="8.5" y="0.5" width="4" height="7"/></g>
 <path d="M0.5 2.5 H12.5" stroke="#888"/>
 <ellipse cx="11" cy="11.5" rx="4.5" ry="2.5" fill="#ddd" stroke="#777"/><circle cx="11" cy="11.5" r="1.2" fill="#555"/>
</svg>
<div class="a" style="left:133px;top:185px;width:1px;height:23px;background:#bfc3c5"></div>
<svg style="left:141px;top:188px" width="15" height="16" viewBox="0 0 15 16">
 <path d="M3 2.5 L10.5 1 L13.5 5 V13 L10.5 15.5 L3 13.5Z" fill="#f2d9a6" stroke="#c8a060"/>
 <path d="M3 4 H9 V14.5 L3 13.5Z" fill="#fff3d8" stroke="#c8a060" stroke-width="0.8"/>
 <circle cx="3.5" cy="3.5" r="3" fill="#f6a21d"/><circle cx="3.5" cy="3.5" r="1.3" fill="#ffe9a8"/>
</svg>
<div class="a" style="left:165px;top:185px;width:1px;height:23px;background:#bfc3c5"></div>
<svg style="left:174px;top:189px" width="15" height="15" viewBox="0 0 15 15">
 <g fill="#fff" stroke="#333" stroke-width="1.1"><rect x="0.6" y="0.6" width="3.3" height="3.3"/><rect x="0.6" y="11.1" width="3.3" height="3.3"/></g>
 <rect x="0.6" y="5.8" width="3.3" height="3.3" fill="#5fb4e0" stroke="#2a7fb0" stroke-width="1.1"/>
 <path d="M2.25 3.9 V5.8 M2.25 9.1 V11.1" stroke="#333"/>
 <path d="M5.5 7 H15 L11.5 10.5 V14.5 H9 V10.5Z" fill="#333"/>
</svg>
<svg style="left:197px;top:189px" width="15" height="15" viewBox="0 0 15 15">
 <rect x="0.6" y="0.6" width="3.6" height="12.8" fill="#79cdf0" stroke="#1f86bd" stroke-width="1.2"/>
 <g fill="#fff" stroke="#444" stroke-width="1.1"><rect x="4.4" y="0.6" width="4.4" height="3"/><rect x="8.8" y="0.6" width="4.4" height="3"/></g>
 <path d="M6 6 H12 L14.5 8.5 V14.5 H6Z" fill="#eef2f4" stroke="#777"/>
 <path d="M8 9.5 H12.5 M8 12 H12.5" stroke="#777" stroke-dasharray="1 1"/>
</svg>
<svg style="left:222px;top:192px" width="9" height="7" viewBox="0 0 9 7"><path d="M0.5 0.5 L3.5 3.5 L0.5 6.5 M4.5 0.5 L7.5 3.5 L4.5 6.5" fill="none" stroke="#333" stroke-width="1.6"/></svg>
<svg style="left:240px;top:189px" width="17" height="17" viewBox="0 0 17 17">
 <path d="M0.5 0.5 H10 L14.5 5 V15 H0.5Z" fill="#eef1f4" stroke="#a9b3ba"/>
 <path d="M10 0.5 V5 H14.5" fill="#d8e6f0" stroke="#a9b3ba"/>
 <circle cx="3.5" cy="7.5" r="1.2" fill="none" stroke="#9aa"/><circle cx="3.5" cy="11" r="1.2" fill="none" stroke="#9aa"/>
 <path d="M6 7.5 H12 M6 11 H12" stroke="#9aa" stroke-width="1.3"/>
 <path d="M16.5 14 V16.5 H14Z" fill="#333"/>
</svg>
<!-- filter row -->
<svg style="left:12px;top:217px" width="16" height="14" viewBox="0 0 16 14">
 <path d="M0.5 0.8 H15.5 L9.5 7.3 V13.5 H6.5 V7.3Z" fill="#fff" stroke="#555" stroke-width="1"/>
</svg>
<div class="a" style="left:32px;top:212px;width:185px;height:26px;background:#fff;border:1px solid #b4bfc2"></div>
<svg style="left:204px;top:221px" width="8" height="8" viewBox="0 0 8 8"><path d="M0.5 0.5 L7.5 7.5 M7.5 0.5 L0.5 7.5" stroke="#777" stroke-width="1.1"/></svg>
<div class="arr" style="left:223px;top:222px;border-left-width:4px;border-right-width:4px;border-top:4.5px solid #555"></div>
<div class="a" style="left:241px;top:223px;width:11px;height:2.4px;background:#8a8a8a"></div>
<div class="a" style="left:245.3px;top:218.5px;width:2.4px;height:11px;background:#8a8a8a"></div>
<!-- tree -->
<svg style="left:12px;top:246px" width="14" height="13" viewBox="0 0 14 13">
 <path d="M0.5 3.5 L3.5 0.5 H13.5 V9.5 L10.5 12.5 H0.5Z" fill="#bfe8fa" stroke="#2f8ec0"/>
 <path d="M0.5 3.5 H10.5 V12.5 M10.5 3.5 L13.5 0.5" fill="none" stroke="#2f8ec0"/>
</svg>
<div class="t" style="left:32px;top:245px;font-size:12.4px;letter-spacing:-0.25px;color:#474747;transform:scaleX(0.9);transform-origin:0 0">PRT0001.PRT</div>
<div class="a" style="left:19px;top:262px;width:1px;height:123px;background:#c4c8ca"></div>
<div class="a" style="left:19px;top:289px;width:9px;height:1px;background:#c4c8ca"></div>
<div class="a" style="left:19px;top:308px;width:9px;height:1px;background:#c4c8ca"></div>
<div class="a" style="left:19px;top:327px;width:9px;height:1px;background:#c4c8ca"></div>
<div class="a" style="left:19px;top:346px;width:9px;height:1px;background:#c4c8ca"></div>
<div class="a" style="left:19px;top:366px;width:9px;height:1px;background:#c4c8ca"></div>
<div class="a" style="left:17px;top:266px;width:0;height:0;border-top:4px solid transparent;border-bottom:4px solid transparent;border-left:4px solid #444"></div>
<div class="a" style="left:17px;top:381px;width:0;height:0;border-top:4px solid transparent;border-bottom:4px solid transparent;border-left:4px solid #444"></div>
<svg style="left:32px;top:263px" width="13" height="15" viewBox="0 0 13 15">
 <rect x="0.5" y="0.5" width="12" height="14" fill="#fbfcfd" stroke="#8a949a"/>
 <rect x="1" y="1" width="11" height="1.6" fill="#5cb8e6"/>
 <g fill="#2f9ad6"><circle cx="3.2" cy="5" r="1.4"/><circle cx="3.2" cy="8.3" r="1.4"/><circle cx="3.2" cy="11.6" r="1.4"/></g>
 <path d="M6 5 H10.5 M6 8.3 H10.5 M6 11.6 H10.5" stroke="#8a8a8a" stroke-width="0.9"/>
</svg>
<div class="t" style="left:51px;top:264px;letter-spacing:0">設計項目</div>
<svg style="left:30px;top:284px" width="16" height="10" viewBox="0 0 16 10"><path d="M4 0.8 H15 L11.5 9.2 H0.8Z" fill="none" stroke="#8c6d2c" stroke-width="1.3"/></svg>
<div class="t" style="left:51px;top:283px;font-size:12.4px;letter-spacing:-0.25px;color:#474747;transform:scaleX(0.9);transform-origin:0 0">RIGHT</div>
<svg style="left:30px;top:303px" width="16" height="10" viewBox="0 0 16 10"><path d="M4 0.8 H15 L11.5 9.2 H0.8Z" fill="none" stroke="#8c6d2c" stroke-width="1.3"/></svg>
<div class="t" style="left:51px;top:302px;font-size:12.4px;letter-spacing:-0.25px;color:#474747;transform:scaleX(0.9);transform-origin:0 0">TOP</div>
<svg style="left:30px;top:322px" width="16" height="10" viewBox="0 0 16 10"><path d="M4 0.8 H15 L11.5 9.2 H0.8Z" fill="none" stroke="#8c6d2c" stroke-width="1.3"/></svg>
<div class="t" style="left:51px;top:321px;font-size:12.4px;letter-spacing:-0.25px;color:#474747;transform:scaleX(0.9);transform-origin:0 0">FRONT</div>
<svg style="left:30px;top:339px" width="16" height="16" viewBox="0 0 16 16"><path d="M3 0.5 V11.5 L15 11.5 M3 11.5 L0.5 14.5" fill="none" stroke="#8c6d2c" stroke-width="1.2"/><circle cx="3" cy="1" r="1" fill="#8c6d2c"/><circle cx="15" cy="11.5" r="1" fill="#8c6d2c"/><circle cx="1" cy="14.5" r="1" fill="#8c6d2c"/></svg>
<div class="t" style="left:51px;top:340px;font-size:12.4px;letter-spacing:-0.25px;color:#474747;transform:scaleX(0.9);transform-origin:0 0">PRT_CSYS_DEF</div>
<svg style="left:30px;top:360px" width="15" height="12" viewBox="0 0 15 12"><path d="M1.5 10 A6 6 0 0 1 13.5 10" fill="none" stroke="#bbb" stroke-width="1.2"/><g fill="#c8c8c8"><circle cx="1" cy="1" r="0.7"/><circle cx="5" cy="1" r="0.7"/><circle cx="9" cy="1" r="0.7"/><circle cx="13" cy="1" r="0.7"/><circle cx="1" cy="11" r="0.7"/><circle cx="5" cy="11" r="0.7"/><circle cx="9" cy="11" r="0.7"/><circle cx="13" cy="11" r="0.7"/></g></svg>
<div class="t" style="left:51px;top:360px;letter-spacing:0;color:#c2b9a6">草繪 1</div>
<svg style="left:30px;top:377px" width="16" height="16" viewBox="0 0 16 16">
 <path d="M0.5 5.5 L5 1 H15.5 V11 L11 15.5 H0.5Z" fill="#bfe6f7" stroke="#8aa3b0"/>
 <rect x="0.5" y="5.5" width="10.5" height="10" fill="#f4f4f4" stroke="#999"/>
 <path d="M11 5.5 L15.5 1" stroke="#8aa3b0"/>
</svg>
<div class="t" style="left:51px;top:379px;letter-spacing:0">引伸 1</div>
<div class="a" style="left:12px;top:401px;width:247px;height:2px;background:#6cc64a"></div>
<div class="a" style="left:12px;top:398px;width:1px;height:8px;background:#6cc64a"></div>
<div class="a" style="left:258px;top:398px;width:1px;height:8px;background:#6cc64a"></div>
<!-- 3D model -->
<svg style="left:0;top:0" width="1280" height="729" viewBox="0 0 1280 729">
 <polygon points="578,350.5 875.5,350.5 816.7,538.7 521.5,539" fill="#aab8c8"/>
 <polygon points="521.5,539 816.7,538.7 866.5,638 569,638" fill="#6f7782"/>
 <polygon points="875.5,350.5 923.8,449 866.5,638 816.7,538.7" fill="#575d68"/>
 <g fill="none" stroke="#1a1a1a" stroke-width="1.2">
  <path d="M578,350.5 L521.5,539 L569,638"/>
  <path d="M816.7,539 L866.5,638"/>
  <path d="M875.5,350.5 L816.7,538.7"/>
  <path d="M875.5,350.5 L923.8,449 L866.5,638"/>
 </g>
 <path d="M578,350.6 H875.5" stroke="#2e1a1c" stroke-width="1.7"/>
 <path d="M580,352.4 H874" stroke="#c9d9e8" stroke-width="1"/>
 <path d="M523,538.3 H817" stroke="#c8dbea" stroke-width="1"/>
 <path d="M521.5,539.5 H817" stroke="#0a0a0a" stroke-width="1.3"/>
 <path d="M569,637.9 H866.5" stroke="#0a0a0a" stroke-width="1.3"/>
 <path d="M569.5,639.4 H866" stroke="#8a4a4c" stroke-width="1.3"/>
 <path d="M570,640.8 H866" stroke="#ffffff" stroke-width="1" opacity="0.8"/>
 <g fill="none" stroke="#7a4446" stroke-width="1.15">
  <path d="M578,350.5 L625.3,449"/>
  <path d="M625.3,448.3 H925" stroke-width="1.4"/>
  <path d="M627,451.5 H923.5"/>
  <path d="M725.8,348.5 L774.7,449"/>
  <path d="M725.8,348.5 L667,539 L716,638"/>
  <path d="M625.3,450 L569,638"/>
  <path d="M774.9,450 L715.8,638"/>
  <path d="M877.2,350.2 L925.6,448.8 L868.2,638.5"/>
 </g>
</svg>
<!-- view toolbar -->
<div class="a" style="left:571px;top:163px;width:404px;height:31px;background:#f6f8f9;border:1px solid #b5b9bc;box-shadow:inset 1px 1px 0 #fff"></div>
<div class="a" style="left:849px;top:168px;width:22px;height:22px;background:#dcdedf;border:1px solid #bfc2c4"></div>
<!-- view toolbar icons -->
<svg style="left:578px;top:171px" width="17" height="16" viewBox="0 0 17 16">
 <rect x="0.5" y="0.5" width="14" height="13" fill="#fff" stroke="#9a9a9a"/>
 <path d="M10.5 9.5 L15.5 14.5" stroke="#777" stroke-width="2.6"/><path d="M10.5 9.5 L15.5 14.5" stroke="#eee" stroke-width="1"/>
 <circle cx="7.5" cy="6.5" r="4.3" fill="#e6f4fb" stroke="#3f8fb5" stroke-width="1.3"/>
</svg>
<svg style="left:603px;top:170px" width="16" height="17" viewBox="0 0 16 17">
 <path d="M9.5 10 L14.5 15.5" stroke="#777" stroke-width="2.6"/><path d="M9.5 10 L14.5 15.5" stroke="#eee" stroke-width="1"/>
 <circle cx="6" cy="6.3" r="5.3" fill="#eef7fb" stroke="#3f8fb5" stroke-width="1.3"/>
 <path d="M3 6.3 H9 M6 3.3 V9.3" stroke="#1b5f8c" stroke-width="2"/>
</svg>
<svg style="left:628px;top:170px" width="16" height="17" viewBox="0 0 16 17">
 <path d="M9.5 10 L14.5 15.5" stroke="#777" stroke-width="2.6"/><path d="M9.5 10 L14.5 15.5" stroke="#eee" stroke-width="1"/>
 <circle cx="6" cy="6.3" r="5.3" fill="#eef7fb" stroke="#3f8fb5" stroke-width="1.3"/>
 <path d="M3 6.3 H9" stroke="#1b5f8c" stroke-width="2"/>
</svg>
<svg style="left:653px;top:171px" width="15" height="15" viewBox="0 0 15 15">
 <defs><linearGradient id="rf" x1="0" y1="0" x2="1" y2="1"><stop offset="0" stop-color="#fff"/><stop offset="0.5" stop-color="#d8f0fa"/><stop offset="1" stop-color="#4aa3c8"/></linearGradient></defs>
 <rect x="0.5" y="0.5" width="14" height="14" fill="url(#rf)" stroke="#a0a0a0"/>
 <path d="M0.5 1 H14.5" stroke="#999" stroke-width="1.5"/>
 <path d="M2.5 13.5 L13 3" stroke="#1f6d99" stroke-width="1.6"/>
</svg>
<svg style="left:678px;top:170px" width="18" height="18" viewBox="0 0 18 18">
 <defs><radialGradient id="sp" cx="0.35" cy="0.35" r="0.7"><stop offset="0" stop-color="#fff"/><stop offset="1" stop-color="#888"/></radialGradient><linearGradient id="cb" x1="0" y1="0" x2="1" y2="0"><stop offset="0" stop-color="#fafafa"/><stop offset="1" stop-color="#9a9a9a"/></linearGradient></defs>
 <path d="M7 3 L10 0.5 H15 V9 L12 12 H7Z" fill="url(#cb)"/>
 <circle cx="5.5" cy="10.5" r="5" fill="url(#sp)"/>
 <path d="M14 15 H17 V12Z" fill="#444"/>
</svg>
<svg style="left:702px;top:170px" width="19" height="18" viewBox="0 0 19 18">
 <path d="M1 4.5 L4.5 1 H15 V11.5 L11.5 15 H1Z" fill="#fff" stroke="#1f6f9a" stroke-width="1.4"/>
 <path d="M11.5 4.5 L15 1 V11.5 L11.5 15Z" fill="#5aaed3"/>
 <path d="M1 4.5 H11.5 V15 M11.5 4.5 L15 1" fill="none" stroke="#1f6f9a" stroke-width="1.4"/>
 <path d="M15.5 15.5 H18.5 V12.5Z" fill="#444"/>
</svg>
<svg style="left:727px;top:170px" width="19" height="18" viewBox="0 0 19 18">
 <path d="M0.8 6 L4.5 0.8 H11.5 L15.2 6 L11.5 12.5 H4.5Z" fill="#d7f0fb" stroke="#6fbde0" stroke-width="1"/>
 <path d="M0.8 6 H11.5 L15.2 0.8" fill="none" stroke="#6fbde0"/>
 <path d="M11.5 1 L15.5 7 H9Z" fill="#3f98c6"/>
 <rect x="9.5" y="8.5" width="6" height="7" fill="#f7f7f7" stroke="#888"/>
 <path d="M11 11 H14 M11 13 H14" stroke="#666" stroke-width="1.1"/>
 <path d="M15.5 15.5 H18.5 V12.5Z" fill="#444"/>
</svg>
<svg style="left:752px;top:170px" width="17" height="17" viewBox="0 0 17 17">
 <rect x="0.5" y="0.5" width="13" height="14" fill="#fafafa" stroke="#bbb"/>
 <path d="M0.5 3.5 H13.5 M0.5 6.5 H13.5 M0.5 9.5 H13.5 M0.5 12.5 H13.5 M3.5 0.5 V14.5" stroke="#c5c5c5"/>
 <path d="M6 9 H9 L10 7.5 H13 L14 9 H16.5 V16 H6Z" fill="#555"/>
 <circle cx="11.3" cy="12.3" r="2.3" fill="#ddd" stroke="#333"/>
</svg>
<svg style="left:777px;top:170px" width="17" height="16" viewBox="0 0 17 16">
 <path d="M0.8 3.5 L5 0.8 H16 L14 10.5 L8.5 15 L2 11Z" fill="#a8d5ea" stroke="#5aaad2" stroke-width="1"/>
 <path d="M0.8 3.5 H11 L16 0.8 M11 3.5 L8.5 15" fill="none" stroke="#5aaad2"/>
 <path d="M3.5 6 H9 L7.5 12 L3.8 9.5Z" fill="#e4f3fa"/>
</svg>
<svg style="left:802px;top:170px" width="19" height="18" viewBox="0 0 19 18">
 <path d="M4 0.8 H15 V10 L11 15 H0.8 V5Z" fill="#d7f0fb"/>
 <path d="M0.8 5 L4 0.8 H15 M11 15 L15 10" fill="none" stroke="#8ccbe8"/>
 <path d="M11 15 L15 10 V0.8" fill="none" stroke="#aaa" stroke-dasharray="1 1"/>
 <path d="M0.8 15 H11" fill="none" stroke="#aaa" stroke-dasharray="1 1"/>
 <path d="M0.8 15.5 L15.5 0.8" stroke="#1f6f9a" stroke-width="1.6"/>
 <path d="M15.5 15.5 H18.5 V12.5Z" fill="#444"/>
</svg>
<svg style="left:826px;top:170px" width="20" height="18" viewBox="0 0 20 18">
 <g stroke="#8a6a2a" stroke-width="1.4" fill="none">
 <path d="M1 1 L4 4 M4 1 L1 4"/>
 <path d="M9 1 L7.5 4.5 M6.5 7 L5 10.5 M3.5 13 L2 16.5" stroke-width="1.6"/>
 <path d="M10 6 V12 L15 14 M10 12 L5.5 15" />
 </g>
 <circle cx="10" cy="6" r="1" fill="#8a6a2a"/><circle cx="15" cy="14" r="1" fill="#8a6a2a"/>
 <path d="M16.5 15.5 H19.5 V12.5Z" fill="#444"/>
</svg>
<svg style="left:852px;top:171px" width="17" height="16" viewBox="0 0 17 16">
 <rect x="0.5" y="0.5" width="8" height="5" fill="#fdf3d5" stroke="#999"/>
 <path d="M8.5 3 H15 V7" fill="none" stroke="#444" stroke-width="1.2"/>
 <path d="M12 6 H17 L14.5 9Z" fill="#333"/>
 <path d="M6.5 13 Q11 8.5 15.5 13 Q11 17.5 6.5 13Z" fill="#fff" stroke="#333" stroke-width="1.3"/>
 <circle cx="11" cy="13" r="1.8" fill="#333"/>
</svg>
<svg style="left:878px;top:170px" width="16" height="16" viewBox="0 0 16 16">
 <path d="M3 3 L7.5 8 L12.5 8.5 M7.5 8 L3 13" fill="none" stroke="#333" stroke-width="1.3"/>
 <circle cx="3" cy="2.8" r="2.3" fill="#6cc05a" stroke="#3f8f3a" stroke-width="0.8"/>
 <circle cx="13" cy="8.5" r="2.3" fill="#f07b7b" stroke="#c04a4a" stroke-width="0.8"/>
 <circle cx="3" cy="13.2" r="2.3" fill="#3b8fc5" stroke="#2a6f9a" stroke-width="0.8"/>
</svg>
<svg style="left:902px;top:170px" width="16" height="16" viewBox="0 0 16 16">
 <path d="M7 1 L13.5 13.5 H0.8Z" fill="none" stroke="#b5b5b5" stroke-width="2"/>
 <path d="M7 6 L9.5 11 H4.5Z" fill="none" stroke="#c5c5c5" stroke-width="1.2"/>
 <circle cx="12.5" cy="12.5" r="3" fill="#f0f0f0" stroke="#bbb"/>
 <path d="M11.5 11 L14 12.5 L11.5 14Z" fill="#aaa"/>
</svg>
<div class="a" style="left:928px;top:172px;width:4px;height:12px;background:#a9a9a9"></div>
<div class="a" style="left:935px;top:172px;width:4px;height:12px;background:#a9a9a9"></div>
<svg style="left:951px;top:171px" width="17" height="14" viewBox="0 0 17 14">
 <defs><linearGradient id="lg16" x1="0" y1="0" x2="1" y2="0"><stop offset="0" stop-color="#d5d5d5"/><stop offset="1" stop-color="#b5b5b5"/></linearGradient></defs>
 <path d="M0.5 1.5 H16.5 V12.5 H5 Q8 7 3 5Z" fill="url(#lg16)" stroke="#c8c8c8"/>
</svg>
<!-- status bar -->
<div class="a" style="left:1px;top:693px;width:262px;height:1px;background:#fff"></div>
<div class="a" style="left:7px;top:700px;width:21px;height:23px;background:#dcdfe0;border:1px solid #c3c7c9"></div>
<svg style="left:9px;top:704px" width="17" height="16" viewBox="0 0 17 16">
 <rect x="0.5" y="0.5" width="15" height="14" fill="#f1f1f1" stroke="#a8a8a8"/>
 <rect x="1" y="1" width="14" height="2" fill="#fff"/>
 <rect x="0.8" y="3.5" width="4.5" height="11" fill="#e9f5fa" stroke="#3a8fbf" stroke-width="1.2"/>
 <path d="M7 12.5 Q11.5 8 16 12.5 Q11.5 17 7 12.5Z" fill="#333"/>
 <circle cx="11.5" cy="12.5" r="1.5" fill="#fff"/>
</svg>
<svg style="left:34px;top:703px" width="17" height="17" viewBox="0 0 17 17">
 <defs><radialGradient id="gl" cx="0.55" cy="0.5" r="0.6"><stop offset="0" stop-color="#b5e6fa"/><stop offset="1" stop-color="#1d84c6"/></radialGradient></defs>
 <circle cx="8.8" cy="8.3" r="6.8" fill="url(#gl)"/>
 <path d="M4.5 5 Q7 6.5 6.5 9 Q8.5 11.5 10.5 10 M11.5 3.5 Q10.5 6 13 7" fill="none" stroke="#e0f5fc" stroke-width="1"/>
 <ellipse cx="8.5" cy="8.5" rx="9" ry="3.2" transform="rotate(-45 8.5 8.5)" fill="none" stroke="#4a4a4a" stroke-width="1.2"/>
</svg>
<svg style="left:59px;top:704px" width="16" height="16" viewBox="0 0 16 16">
 <defs><linearGradient id="sq" x1="0" y1="0" x2="0" y2="1"><stop offset="0" stop-color="#fafcfd"/><stop offset="1" stop-color="#ccdde6"/></linearGradient></defs>
 <rect x="0.7" y="0.7" width="14.6" height="14.6" rx="1.2" fill="url(#sq)" stroke="#4a8fb5" stroke-width="1.3"/>
</svg>
<div class="a" style="left:86px;top:700px;width:1px;height:23px;background:#b9bdbf"></div>
<div class="a" style="left:909px;top:700px;width:1px;height:23px;background:#bfc3c5"></div>
<div class="a" style="left:913px;top:700px;width:1px;height:23px;background:#bfc3c5"></div>
<svg style="left:918px;top:704px" width="18" height="15" viewBox="0 0 18 15">
 <g fill="#3d3d3d"><rect x="2" y="0.5" width="4" height="4"/><rect x="12" y="0.5" width="4" height="4"/>
 <path d="M1 5 H7.5 V14.5 H0.5Z"/><path d="M10.5 5 H17 L17.5 14.5 H10.5Z"/><rect x="7" y="5" width="4" height="5"/></g>
 <path d="M2 7 V12 M12 7 V12" stroke="#8a8a8a" stroke-width="1"/>
</svg>
<div class="arr" style="left:941px;top:710px;border-left-width:3.5px;border-right-width:3.5px;border-top:4px solid #666"></div>
<div class="a" style="left:953px;top:700px;width:1px;height:23px;background:#bfc3c5"></div>
<div class="a" style="left:959px;top:705px;width:15px;height:12px;border:1.3px dashed #555"></div>
<div class="arr" style="left:982px;top:710px;border-left-width:3.5px;border-right-width:3.5px;border-top:4px solid #666"></div>
<svg style="left:998px;top:703px" width="17" height="16" viewBox="0 0 17 16">
 <rect x="0.6" y="0.6" width="15" height="14.5" fill="#cdeaf7" stroke="#2a7fb0" stroke-width="1.1" stroke-dasharray="2 1.3"/>
 <path d="M2.5 5 Q6 1.5 9.5 5 Q6 8.5 2.5 5Z" fill="#fff" stroke="#333" stroke-width="1"/><circle cx="6" cy="5" r="1.2" fill="#333"/>
 <path d="M9 6 V15 L11 13 L13 16 L14.5 15 L12.5 12 H15Z" fill="#fff" stroke="#333" stroke-width="0.9"/>
</svg>
<div class="a" style="left:1104px;top:700px;width:158px;height:22px;background:#fff;border:1px solid #a9b1b4"></div>
<div class="a" style="left:1246px;top:701px;width:1px;height:20px;background:#c5cbcd"></div>
<div class="arr" style="left:1249px;top:709px;border-left-width:4px;border-right-width:4px;border-top:4.5px solid #444"></div>
<div class="t" style="left:1112px;top:704px;letter-spacing:0;color:#555">幾何</div>
<svg style="left:1265px;top:714px" width="12" height="12" viewBox="0 0 12 12"><path d="M11 3 L3 11 M11 7 L7 11" stroke="#b5b5b5" stroke-width="1"/></svg>

<div id="border"></div>
</body>
</html>
